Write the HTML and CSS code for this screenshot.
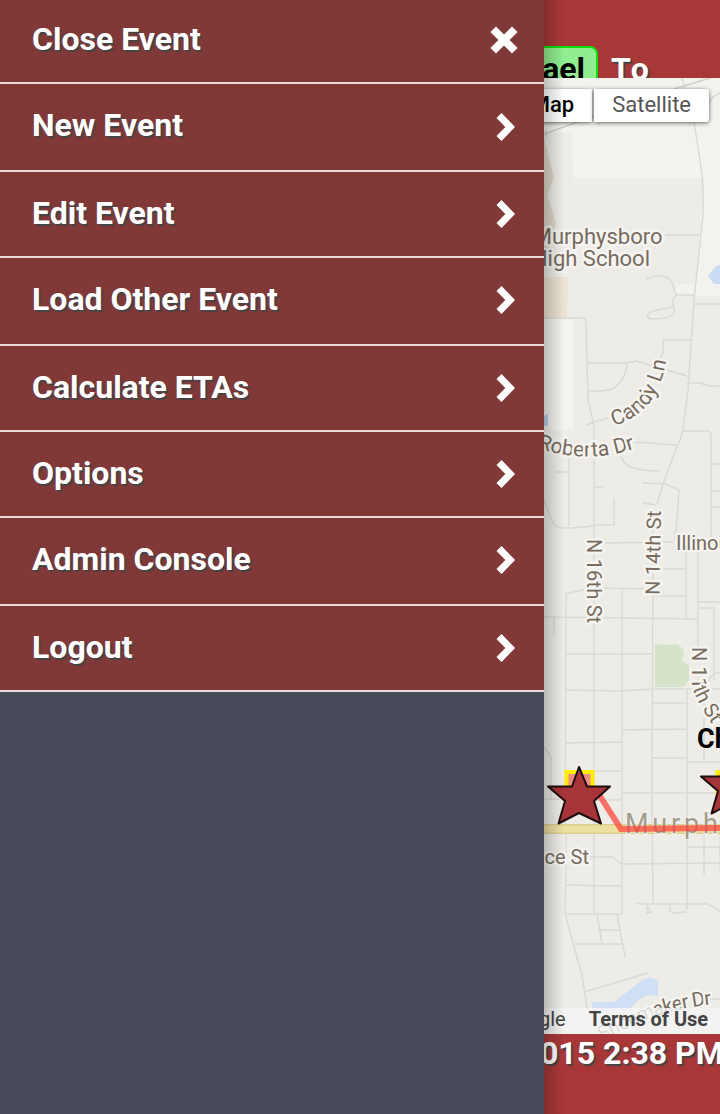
FILE: index.html
```html
<!DOCTYPE html>
<html lang="en">
<head>
<meta charset="utf-8">
<title>Event Menu</title>
<link rel="stylesheet" href="styles.css">
</head>
<body>
<div class="app">
  <nav class="drawer">
    <a class="item first"><span>Close Event</span><svg class="close" viewBox="0 0 28 28"><path d="M6 0.5 14 8.4 22 0.5 27.6 6 19.6 14 27.6 22 22 27.5 14 19.6 6 27.5 0.4 22 8.4 14 0.4 6Z"/></svg></a>
    <a class="item tall"><span>New Event</span><svg class="chev low" viewBox="0 0 20 28"><path d="M5.5 0 19 14 5.5 28 0.5 23 9.3 14 0.5 5Z"/></svg></a>
    <a class="item"><span>Edit Event</span><svg class="chev" viewBox="0 0 20 28"><path d="M5.5 0 19 14 5.5 28 0.5 23 9.3 14 0.5 5Z"/></svg></a>
    <a class="item tall"><span>Load Other Event</span><svg class="chev high" viewBox="0 0 20 28"><path d="M5.5 0 19 14 5.5 28 0.5 23 9.3 14 0.5 5Z"/></svg></a>
    <a class="item"><span>Calculate ETAs</span><svg class="chev" viewBox="0 0 20 28"><path d="M5.5 0 19 14 5.5 28 0.5 23 9.3 14 0.5 5Z"/></svg></a>
    <a class="item"><span>Options</span><svg class="chev" viewBox="0 0 20 28"><path d="M5.5 0 19 14 5.5 28 0.5 23 9.3 14 0.5 5Z"/></svg></a>
    <a class="item tall"><span>Admin Console</span><svg class="chev high" viewBox="0 0 20 28"><path d="M5.5 0 19 14 5.5 28 0.5 23 9.3 14 0.5 5Z"/></svg></a>
    <a class="item"><span>Logout</span><svg class="chev" viewBox="0 0 20 28"><path d="M5.5 0 19 14 5.5 28 0.5 23 9.3 14 0.5 5Z"/></svg></a>
  </nav>
  <main class="page">
    <header class="top"><span class="badge">ael</span><span class="to">To</span></header>
    <section class="map">
      <svg class="canvas" viewBox="544 78 176 956">
        <rect x="544" y="78" width="176" height="956" fill="#edece7"/>
        <g fill="#f3f2ed">
          <path d="M544 78H720V178H574L574 220 572 132H544Z"/>
          <path d="M704 178H720V296H696Z"/>
          <path d="M544 318H573V430H544Z"/>
          <path d="M676 284H698L696 296H674Z"/>
        </g>
        <path d="M544 138 554 178 547 195 556 222 552 240 544 262Z" fill="#ded8c8"/>
        <path d="M544 277H568L567 318H544Z" fill="#ece3d3"/>
        <path d="M708 276 716 266 720 265V284H714Z" fill="#c8dcf5"/>
        <path d="M544 416 548 414V426H544Z" fill="#b9cfea"/>
        <path d="M655 645Q660 643 662 645L677 644Q684 648 684 654L682 661 689 665V680L684 687H655Z" fill="#d6e3c9"/>
        <path d="M592 1002H614L641 981Q650 974 658 981V996L648 995Q640 998 632 1006V1010H592Z" fill="#cfdff5"/>
        <g fill="none" stroke="#dad9d5" stroke-width="1.4">
          <path stroke="#cfcecb" d="M544 134 600 114M546 130V137M674 89 720 75"/>
          <path d="M682 78 692 110 700 160Q704 185 703 215L694 300 688 390 683 430Q681 440 676 449L663 484 657 504"/>
          <path d="M708 105Q712 96 720 93M665 235H699M646 279Q668 270 673 285L676 295H694M676 295 673 300V307Q660 309 650 312Q644 318 652 319Q668 319 674 314V306M694 304H720"/>
          <path d="M544 318H583Q586 318 586 322L588 400 594 425V840M587 363H627L636 361 687 376M627 363Q627 378 614 388Q606 392 589 391M587 425 594 422 608 418M663 352V340H691M663 352 658 366M687 383H700L709 386H720M634 442 677 445M683 431H708Q711 431 711 436V540M711 464H720M711 491H720M711 507H720M621 456Q624 471 659 471M642 483 665 484 679 490 677 520 675 540M643 503 656 505M569 454V526M555 472H568M594 487H603M614 498V525H594M544 501 553 523Q556 529 572 528L594 526"/>
          <path d="M605 543 674 542M565 594 592 588 659 589M544 617 698 619M554 617V634M566 594 565 835M622 588 622 700V913M660 569H686M652 596H686M686 552V618M698 552V650M698 602H720M699 608H714V680M565 654H653M565 690 622 691 653 689H720M653 530 652 810 653 904M653 703H687M622 730 687 729M687 689V910M653 758H687M565 743 622 742M687 762H720M595 771H622M544 799H560M596 800H622M622 793H720M687 847H720M544 747 551 757V800M704 700V760M720 672Q707 675 707 689"/>
          <path d="M566 834V863L565 914 582 975 588 1014M566 885 622 886M594 840V913M565 914H622M589 857H612L622 864 720 863M637 903 641 904H708L720 911M647 905V913L651 912 648 908M670 904V911L673 913 687 912M704 835V875M720 830V870M597 914 602 944M600 930H619M573 944H622M617 914 625 957M584 992 648 973M687 999H720"/>
        </g>
        <path d="M544 829H720" stroke="#dccd91" stroke-width="10"/>
        <path d="M544 829H720" stroke="#eedfa2" stroke-width="7"/>
        <g class="label">
          <text x="662.5" y="244" text-anchor="end" font-size="22">Murphysboro</text>
          <text x="650" y="266" text-anchor="end" font-size="22">High School</text>
          <path id="candy" d="M614 426C638 418 651 404 657 390S 664 374 668 350" fill="none" stroke="none"/>
          <text font-size="21" letter-spacing=".3"><textPath href="#candy">Candy Ln</textPath></text>
          <path id="roberta" d="M537 448Q590 466 642 446" fill="none" stroke="none"/>
          <text font-size="21"><textPath href="#roberta">Roberta Dr</textPath></text>
          <text transform="translate(587 539) rotate(90)" font-size="20" letter-spacing=".2">N 16th St</text>
          <text transform="translate(659.500 595) rotate(-89)" font-size="20" letter-spacing=".2">N 14th St</text>
          <text x="676" y="550" font-size="20">Illinois</text>
          <path id="eleventh" d="M692 647V684Q693 698 719 734" fill="none" stroke="none"/>
          <text class="unkerned" font-size="20"><textPath href="#eleventh">N 11th St</textPath></text>
          <text x="589" y="864" text-anchor="end" font-size="20">ce St</text>
          <path id="shoe" d="M602 1041Q634 1023 660 1015T716 1004" fill="none" stroke="none"/>
          <text font-size="20" letter-spacing="-.8"><textPath href="#shoe">Shoemaker Dr</textPath></text>
        </g>
        <text class="city" x="625" y="832.5">Murph</text>
        <path d="M566.500 772H592.500V796H566.500Z" fill="#ee8c84" stroke="#ffee00" stroke-width="4"/>
        <path d="M717.500 772H742V796H717.500Z" fill="#ee8c84" stroke="#ffee00" stroke-width="4"/>
        <path d="M596 790 621 829 720 828" fill="none" stroke="#ff3c32" stroke-opacity=".7" stroke-width="6"/>
        <g fill="#a63438" stroke="#1c0d0e" stroke-width="2" stroke-linejoin="round">
          <path d="M579 767 587 786.500H610L594 801 601 823.500 579 813 558.500 823.500 565 801 548 786.500H572Z"/>
          <path d="M732 757 740 776.500H763L747 791 754 813.500 732 803 711.500 813.500 718 791 701 776.500H725Z"/>
        </g>
        <text class="place" x="697" y="748">Ch</text>
      </svg>
      <div class="types"><span class="type on">Map</span><span class="type">Satellite</span></div>
      <div class="credits"><span class="google">Google</span><span class="terms">Terms of Use</span></div>
    </section>
    <footer class="bottom"><span>015 2:38 PM</span></footer>
    <div class="shade"></div>
  </main>
</div>
</body>
</html>
```
FILE: styles.css
```css
* { box-sizing: border-box; }
body { margin: 0; font-family: Roboto, "Liberation Sans", sans-serif; }
.app { display: grid; grid-template-columns: 544px 176px; height: 1114px; overflow: hidden; }

.drawer { background: #484959; color: #fff; }
.item {
  display: flex; justify-content: space-between; align-items: center;
  height: 86px; padding: 0 28px 0 32px;
  background: #813938; border-bottom: 2px solid #e8dada;
  font-size: 32px; font-weight: 700; line-height: 38px;
  text-shadow: 2px 2px 1px #444;
}
.item.first { height: 84px; padding-right: 26px; }
.item.tall { height: 88px; }
.item span { padding-bottom: 3px; }
.item.first span { padding-bottom: 4px; }
.item.tall span { padding-bottom: 5px; }
.item svg { fill: #fff; }
.close { width: 28px; height: 28px; margin-bottom: 2px; }
.chev { width: 20px; height: 28px; margin-bottom: 1px; }
.chev.low { margin-bottom: 0; }
.chev.high { margin-bottom: 2px; }

.page { position: relative; display: grid; grid-template-rows: 78px 956px 80px; min-width: 0; overflow: hidden; background: #a83838; }
.top { display: flex; overflow: hidden; padding-top: 46px; font-size: 32px; font-weight: 700; line-height: 42px; }
.badge {
  display: flex; flex: none; justify-content: flex-end; width: 74px; height: 50px; margin-left: -20px; padding-right: 11px;
  background: #90ee90; border: 2px solid #0de00d; border-radius: 8px; color: #000;
}
.to { margin: 2px 0 0 13px; color: #fff; text-shadow: 2px 2px 1px #444; font-kerning: none; }

.map { position: relative; overflow: hidden; }
.canvas { display: block; width: 176px; height: 956px; }
.label { fill: #766c5f; stroke: #f5f4f0; stroke-width: 5px; stroke-linejoin: round; paint-order: stroke; }
.unkerned { font-kerning: none; }
.city { font-size: 27px; letter-spacing: 3.8px; fill: #a19c8b; stroke: #f5f4f0; stroke-width: 3px; stroke-opacity: .6; paint-order: stroke; }
.place { font-size: 27px; font-weight: 700; fill: #000; }

.types { position: absolute; top: 11px; right: 11px; display: flex; gap: 2px; font-size: 22px; line-height: 31px; }
.type { height: 33px; padding: 0 18px; background: #fff; color: #565656; box-shadow: 0 1px 4px rgba(0, 0, 0, .6); border-radius: 0 3px 3px 0; }
.type.on { color: #000; font-weight: 500; border-radius: 0; }

.credits { position: absolute; right: 0; bottom: 0; display: flex; height: 26px; font-size: 20px; line-height: 23px; white-space: nowrap; color: #444; background: rgba(245, 245, 245, .72); }
.google { padding-right: 13px; }
.terms { padding: 0 12px 0 10px; font-weight: 700; letter-spacing: -.05px; background: rgba(245, 245, 245, .3); }

.bottom { overflow: hidden; color: #fff; font-size: 32px; font-weight: 700; line-height: 38px; white-space: nowrap; text-shadow: 2px 2px 1px #444; }
.bottom span { margin-left: -4px; }
.shade { position: absolute; top: 0; left: 0; width: 20px; height: 100%; background: linear-gradient(to right, rgba(0, 0, 0, .22), rgba(0, 0, 0, .12) 40%, rgba(0, 0, 0, 0)); }
```
